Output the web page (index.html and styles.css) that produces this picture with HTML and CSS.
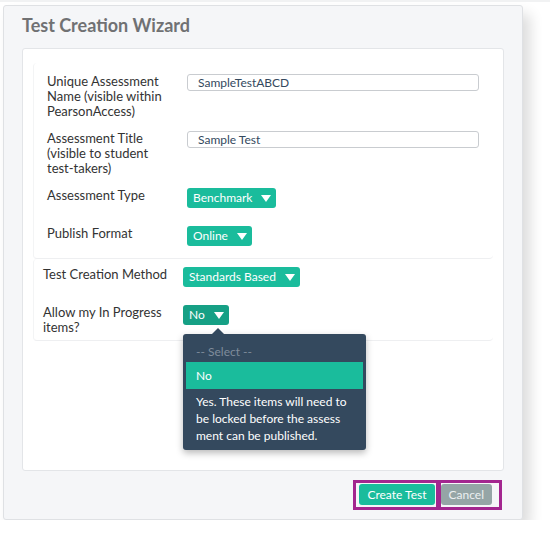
FILE: index.html
```html
<!DOCTYPE html>
<html lang="en">
<head>
    <meta charset="UTF-8">
    <meta name="viewport" content="width=device-width, initial-scale=1.0">
    <title>Test Creation Wizard</title>
    <link rel="stylesheet" href="styles.css">
</head>
<body>
    <div class="wizard">
        <h1 class="wizard-title">Test Creation Wizard</h1>

        <div class="wizard-body">
            <div class="section section-first">
                <div class="row">
                    <label class="row-label" for="uniqueName">Unique Assessment<br>Name (visible within<br>PearsonAccess)</label>
                    <input class="text-input" type="text" id="uniqueName" value="SampleTestABCD">
                </div>
                <div class="row">
                    <label class="row-label" for="testTitle">Assessment Title<br>(visible to student<br>test-takers)</label>
                    <input class="text-input" type="text" id="testTitle" value="Sample Test">
                </div>
                <div class="row">
                    <span class="row-label">Assessment Type</span>
                    <span class="select">Benchmark <i class="caret"></i></span>
                </div>
                <div class="row">
                    <span class="row-label">Publish Format</span>
                    <span class="select">Online <i class="caret"></i></span>
                </div>
            </div>

            <div class="section section-second">
                <div class="row">
                    <span class="row-label">Test Creation Method</span>
                    <span class="select">Standards Based <i class="caret"></i></span>
                </div>
                <div class="row">
                    <span class="row-label">Allow my In Progress<br>items?</span>
                    <div class="select-wrap">
                        <span class="select select-open">No <i class="caret"></i></span>
                        <!-- open dropdown -->
                        <ul class="menu">
                            <li class="menu-item menu-placeholder">-- Select --</li>
                            <li class="menu-item menu-active">No</li>
                            <li class="menu-item menu-long">Yes. These items will need to<br>be locked before the assess<br>ment can be published.</li>
                        </ul>
                    </div>
                </div>
            </div>
        </div>

        <div class="wizard-footer">
            <span class="mark mark-create"><button class="btn btn-create">Create Test</button></span>
            <span class="mark mark-cancel"><button class="btn btn-cancel">Cancel</button></span>
        </div>
    </div>
</body>
</html>
```

FILE: styles.css
```css
* {
    box-sizing: border-box;
}
body {
    margin: 0;
    font-family: Lato, "Open Sans", sans-serif;
    font-size: 13px;
    color: #333;
    background: #fff;
    border-top: 2px solid #f1f2f3;
}
.wizard {
    width: 520px;
    height: 515px;
    margin: 3px 0 0 3px;
    background: #f5f6f8;
    border: 1px solid #dfe1e4;
    border-radius: 3px;
    box-shadow: 7px 9px 14px rgba(0, 0, 0, 0.14);
    display: flex;
    flex-direction: column;
}
.wizard-title {
    margin: 0;
    padding: 8px 0 0 18px;
    font-size: 18px;
    font-weight: bold;
    line-height: 23px;
    color: #707173;
}
.wizard-body {
    margin: 11px 18px 0 18px;
    height: 423px;
    background: #fff;
    border: 1px solid #e3e5e8;
    border-radius: 3px;
    padding: 14px 10px 0 10px;
}
.section {
    border-left: 1px solid #f3f4f5;
    border-bottom: 1px solid #eeeff1;
    border-radius: 4px;
}
.section-first {
    padding: 11px 0 6px 13px;
}
.section-second {
    padding: 8px 0 5px 9px;
}
.row {
    display: flex;
    align-items: flex-start;
    margin-bottom: 12px;
}
.row:last-child {
    margin-bottom: 0;
}
.row-label {
    width: 140px;
    flex-shrink: 0;
    padding-right: 6px;
    line-height: 15px;
    color: #333;
}
.text-input {
    width: 292px;
    height: 17px;
    padding: 0 10px;
    border: 1px solid #c9ccd0;
    border-radius: 3px;
    font-family: inherit;
    font-size: 12px;
    color: #34495e;
    background: #fff;
}
.select {
    display: inline-flex;
    align-items: center;
    height: 20px;
    margin-bottom: 6px;
    padding: 0 5px 0 6px;
    background: #1abc9c;
    color: #fff;
    border-radius: 3px;
    font-size: 12px;
    line-height: 20px;
    white-space: nowrap;
}
.caret {
    display: inline-block;
    width: 0;
    height: 0;
    margin-left: 9px;
    border-left: 5px solid transparent;
    border-right: 5px solid transparent;
    border-top: 7px solid #fff;
}
.select-open {
    background: #16a085;
}
.select-wrap {
    position: relative;
}
.menu {
    position: absolute;
    top: 29px;
    left: 0;
    width: 183px;
    margin: 0;
    padding: 3px;
    list-style: none;
    background: #34495e;
    border-radius: 3px;
    box-shadow: 0 3px 7px rgba(0, 0, 0, 0.28);
    font-size: 12px;
    z-index: 2;
}
.menu::before {
    content: "";
    position: absolute;
    top: -6px;
    left: 29px;
    border-left: 6px solid transparent;
    border-right: 6px solid transparent;
    border-bottom: 6px solid #34495e;
}
.menu-item {
    padding: 5px 10px;
    line-height: 17px;
    color: #fff;
    white-space: nowrap;
}
.menu-placeholder {
    padding: 6px 10px 2px;
    color: #7f8c9b;
}
.menu-active {
    background: #1abc9c;
}
.menu-long {
    padding: 4px 10px 3px;
}
.wizard-footer {
    display: flex;
    justify-content: flex-end;
    padding: 9px 20px 0 0;
}
.mark {
    display: inline-flex;
    border: 3px solid #a3268f;
}
.mark-create {
    padding: 1px 1px 2px 3px;
}
.mark-cancel {
    border-width: 3px 3px 3px 2px;
    padding: 1px 7px 2px 0;
}
.btn {
    height: 21px;
    padding: 0 8px;
    border: none;
    border-radius: 3px;
    font-family: inherit;
    font-size: 12px;
    line-height: 21px;
    cursor: pointer;
}
.btn-create {
    background: #1abc9c;
    color: #fff;
}
.btn-cancel {
    background: #95a5a6;
    color: #ecf0f1;
}
```
